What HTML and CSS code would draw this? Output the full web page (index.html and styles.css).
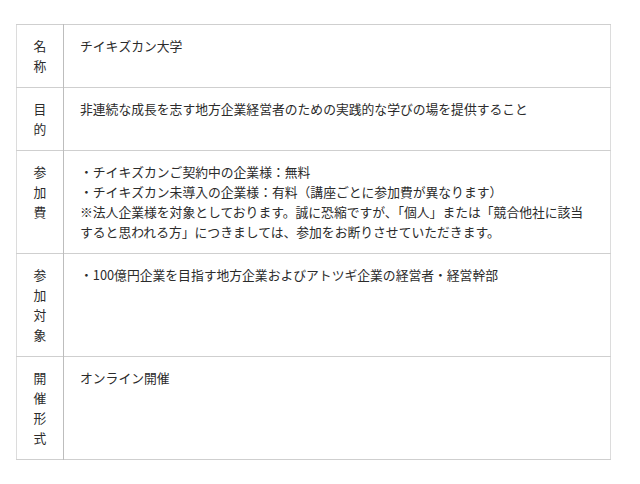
FILE: index.html
```html
<!DOCTYPE html>
<html lang="ja">
<head>
<meta charset="utf-8">
<link rel="stylesheet" href="styles.css">
</head>
<body>
<div class="wrap">
<table class="info">
<tr><th>名称</th><td>チイキズカン大学</td></tr>
<tr><th>目的</th><td>非連続な成長を志す地方企業経営者のための実践的な学びの場を提供すること</td></tr>
<tr><th>参加費</th><td>・チイキズカンご契約中の企業様：無料<br>・チイキズカン未導入の企業様：有料（講座ごとに参加費が異なります）<br>※法人企業様を対象としております。誠に恐縮ですが、「個人」または「競合他社に該当すると思われる方」につきましては、参加をお断りさせていただきます。</td></tr>
<tr><th>参加対象</th><td>・100億円企業を目指す地方企業およびアトツギ企業の経営者・経営幹部</td></tr>
<tr><th>開催形式</th><td>オンライン開催</td></tr>
</table>
</div>
</body>
</html>
```
FILE: styles.css
```css
html, body {
  margin: 0;
  padding: 0;
  background: #fff;
}
.wrap {
  padding: 24px 0 0 16px;
}
.info {
  width: 595px;
  border-collapse: collapse;
  font-family: "Noto Sans CJK JP", "Noto Sans", sans-serif;
  font-size: 12.8px;
  line-height: 20px;
  color: #2b2b2b;
  border: 1px solid #dcdcdc;
}
.info tr {
  border-top: 1px solid #cfcfcf;
  border-bottom: 1px solid #cfcfcf;
}
.info th {
  width: 14px;
  padding: 11px 16px;
  font-weight: normal;
  text-align: center;
  vertical-align: top;
  border-right: 1px solid #bdbdbd;
  word-break: break-all;
}
.info td {
  padding: 11px 16px;
  vertical-align: top;
  text-align: left;
}
```
